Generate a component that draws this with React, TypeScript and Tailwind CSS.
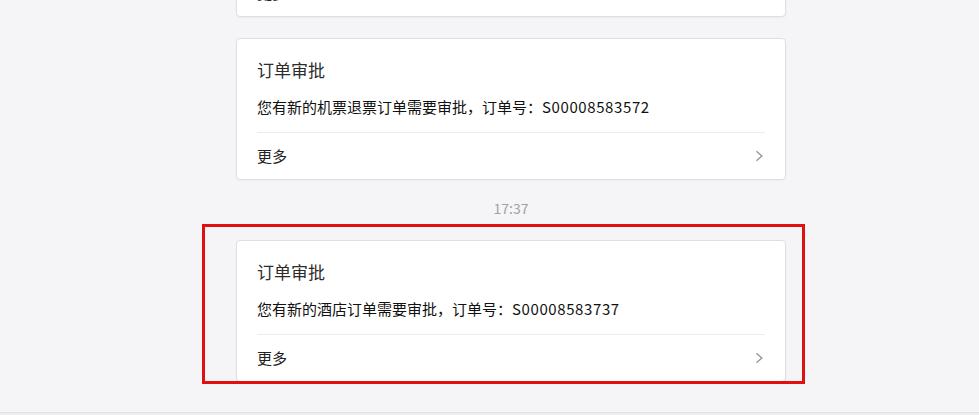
type Notice = {
  title: string
  body: string
  orderNo: string
}

const notices: { time?: string; notice: Notice }[] = [
  { notice: { title: "订单审批", body: "您有新的机票订单需要审批，订单号：", orderNo: "S00008583501" } },
  { notice: { title: "订单审批", body: "您有新的机票退票订单需要审批，订单号：", orderNo: "S00008583572" } },
  { time: "17:37", notice: { title: "订单审批", body: "您有新的酒店订单需要审批，订单号：", orderNo: "S00008583737" } },
]

function NoticeCard({ notice }: { notice: Notice }) {
  return (
    <div className="rounded-[4px] border border-[#dedfe2] bg-white px-5 shadow-[0_1px_2px_rgba(0,0,0,0.04)]">
      <div className="border-b border-[#ececec] pt-[19px] pb-[13px]">
        <div className="h-6 text-[17px] leading-6 text-[#2b2b2b]">{notice.title}</div>
        <div className="mt-[13px] h-6 text-[15px] leading-6 text-[#111]">
          {notice.body}
          <span className="tracking-[0.6px]">{notice.orderNo}</span>
        </div>
      </div>
      <div className="flex h-[46px] items-center justify-between">
        <span className="text-[15px] text-[#222]">更多</span>
        <svg className="mr-[1px]" width="9" height="12" viewBox="0 0 9 12" fill="none">
          <path d="M1.5 1.2 L6.8 6 L1.5 10.8" stroke="#9b9b9b" strokeWidth="1.5" />
        </svg>
      </div>
    </div>
  )
}

export default function App() {
  return (
    <div className="relative flex h-[415px] w-full flex-col overflow-hidden bg-[#f5f5f7] font-['Noto_Sans_CJK_SC','Noto_Sans',sans-serif]">
      <div className="h-[381px] overflow-hidden">
        <div className="-mt-[125px] ml-[236px] flex w-[550px] flex-col">
          {notices.map((item, i) => (
            <div key={i} className={i === 0 || item.time ? "" : "mt-[21px]"}>
              {item.time ? (
                <div className="mt-[18px] mb-[22px] text-center text-[14px] leading-5 text-[#9ca1a8]">
                  {item.time}
                </div>
              ) : null}
              <NoticeCard notice={item.notice} />
            </div>
          ))}
        </div>
      </div>
      <div className="flex-1" />
      <div className="h-[3px] border-t border-[#e3e3e6] bg-[#eeeef0]" />

      {/* highlight frame around the latest message */}
      <div className="pointer-events-none absolute top-[224px] left-[202px] h-[160px] w-[603px] border-[3px] border-[#e10f0f]" />
    </div>
  )
}
